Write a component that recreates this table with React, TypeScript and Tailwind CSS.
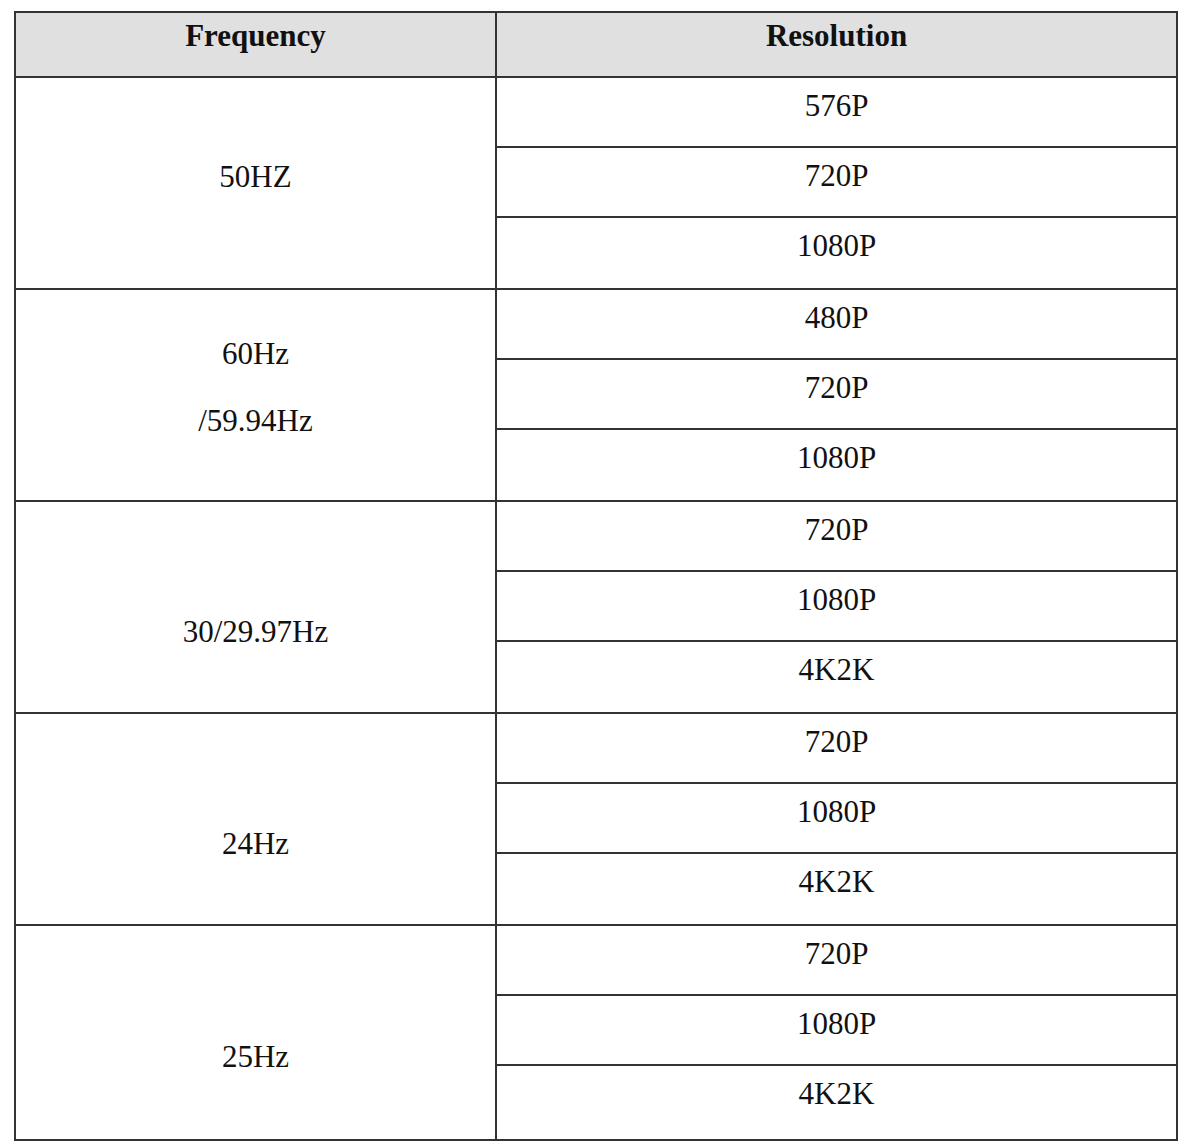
import React from "react";

interface Group {
  freq: string[];
  pad: string;
  res: string[];
}

const groups: Group[] = [
  { freq: ["50HZ"], pad: "pt-[82px]", res: ["576P", "720P", "1080P"] },
  { freq: ["60Hz", "/59.94Hz"], pad: "pt-[47px]", res: ["480P", "720P", "1080P"] },
  { freq: ["30/29.97Hz"], pad: "pt-[113px]", res: ["720P", "1080P", "4K2K"] },
  { freq: ["24Hz"], pad: "pt-[113px]", res: ["720P", "1080P", "4K2K"] },
  { freq: ["25Hz"], pad: "pt-[114px]", res: ["720P", "1080P", "4K2K"] },
];

export default function App() {
  return (
    <div
      className="min-h-[1146px] bg-white pt-[11px] pl-[14px] text-[31px] leading-[34px] text-[#111]"
      style={{ fontFamily: '"Liberation Serif", "Times New Roman", serif' }}
    >
      <div className="w-[1164px] border-2 border-[#333]">
        {/* Header */}
        <div className="flex h-[65px] border-b-2 border-[#333] bg-[#e0e0e0] font-bold">
          <div className="w-[481px] border-r-2 border-[#333] pt-[6px] text-center">Frequency</div>
          <div className="flex-1 pt-[6px] text-center">Resolution</div>
        </div>

        {/* Body */}
        {groups.map((g, gi) => {
          const last = gi === groups.length - 1;
          return (
            <div key={gi} className={`flex ${last ? "" : "border-b-2 border-[#333]"}`}>
              <div className={`w-[481px] border-r-2 border-[#333] text-center ${g.pad}`}>
                {g.freq.map((line, li) => (
                  <div key={li} className={li > 0 ? "mt-[33px]" : ""}>
                    {line}
                  </div>
                ))}
              </div>
              <div className="flex flex-1 flex-col">
                {g.res.map((r, ri) => (
                  <div
                    key={ri}
                    className={`pt-[11px] text-center ${
                      ri < 2 ? "h-[70px] border-b-2 border-[#333]" : last ? "h-[73px]" : "h-[70px]"
                    }`}
                  >
                    {r}
                  </div>
                ))}
              </div>
            </div>
          );
        })}
      </div>
    </div>
  );
}
